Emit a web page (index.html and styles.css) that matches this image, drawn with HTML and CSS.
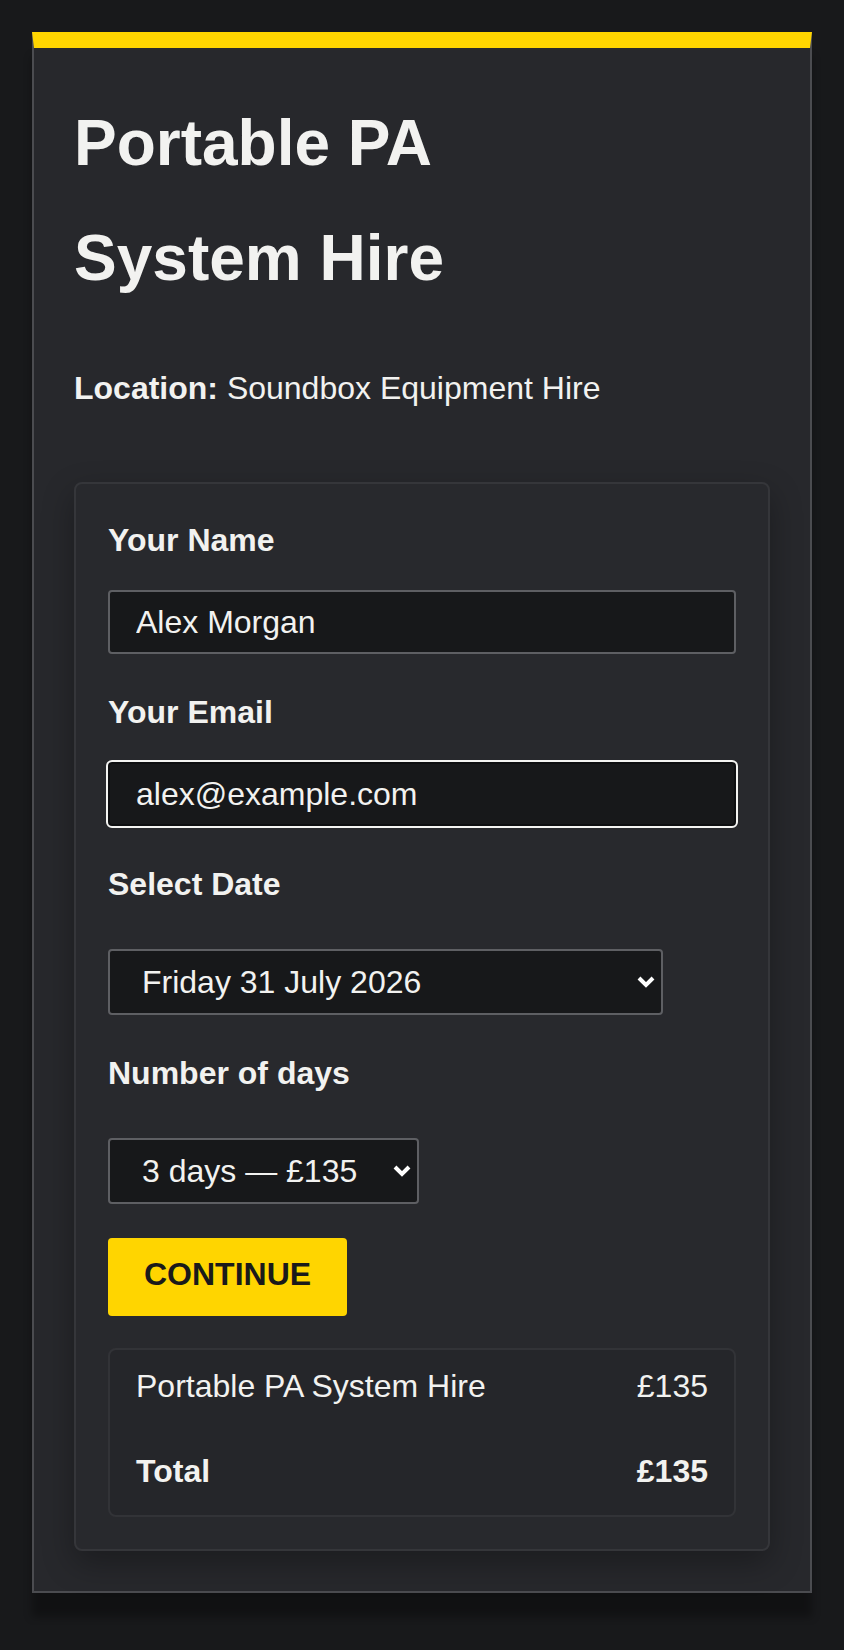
FILE: index.html
```html
<!DOCTYPE html>
<html lang="en">
  <head>
    <meta charset="UTF-8" />
    <meta name="viewport" content="width=device-width, initial-scale=1.0" />
    <title>Portable PA System Hire</title>
    <link rel="stylesheet" href="styles.css">
  </head>

  <body>
    <main class="booking">
      <h1 class="booking-title">Portable PA System Hire</h1>
      <p class="booking-location"><strong>Location:</strong> Soundbox Equipment Hire</p>

      <form class="booking-form">
        <div class="field">
          <label for="name">Your Name</label>
          <input id="name" type="text" value="Alex Morgan" />
        </div>

        <div class="field">
          <label for="email">Your Email</label>
          <input id="email" class="is-focused" type="email" value="alex@example.com" />
        </div>

        <div class="field field-select">
          <label for="date">Select Date</label>
          <div class="select-wrap select-date">
            <select id="date">
              <option>Friday 31 July 2026</option>
              <option>Saturday 1 August 2026</option>
              <option>Sunday 2 August 2026</option>
            </select>
            <svg class="select-arrow" viewBox="0 0 18 12" width="18" height="12">
              <path d="M2 2 L9 9 L16 2" fill="none" stroke="#fff" stroke-width="4" />
            </svg>
          </div>
        </div>

        <div class="field field-select">
          <label for="days">Number of days</label>
          <div class="select-wrap select-days">
            <select id="days">
              <option>1 day — £60</option>
              <option>2 days — £100</option>
              <option selected>3 days — £135</option>
            </select>
            <svg class="select-arrow" viewBox="0 0 18 12" width="18" height="12">
              <path d="M2 2 L9 9 L16 2" fill="none" stroke="#fff" stroke-width="4" />
            </svg>
          </div>
        </div>

        <button type="button" class="continue">CONTINUE</button>

        <div class="summary">
          <div class="summary-row">
            <span>Portable PA System Hire</span>
            <span>£135</span>
          </div>
          <div class="summary-row summary-total">
            <span>Total</span>
            <span>£135</span>
          </div>
        </div>
      </form>
    </main>
  </body>
</html>
```

FILE: styles.css
```css
* {
  box-sizing: border-box;
}

body {
  margin: 0;
  padding: 32px;
  background: #18191b;
  color: #f2f2f0;
  font-family: "Liberation Sans", Arial, sans-serif;
  font-size: 32px;
  line-height: 48px;
}

.booking {
  background: #27282c;
  border: 2px solid #4b4c50;
  border-top: 16px solid #ffd500;
  padding: 38px 40px 40px;
  box-shadow: 0 24px 8px rgba(0, 0, 0, 0.3);
}

.booking-title {
  max-width: 560px;
  margin: 0 0 48px;
  font-size: 64px;
  font-weight: 700;
  line-height: 1.8;
}

.booking-location {
  margin: 0 0 70px;
}

.booking-form {
  background: #28292d;
  border: 2px solid #35363a;
  border-radius: 8px;
  padding: 32px;
  box-shadow: 0 12px 32px rgba(0, 0, 0, 0.3);
}

.field {
  margin-bottom: 34px;
}

.field label {
  display: block;
  font-weight: 700;
  margin-bottom: 26px;
}

.field-select label {
  margin-bottom: 41px;
}

.field input {
  display: block;
  width: 100%;
  height: 64px;
  padding: 0 26px;
  background: #17181a;
  border: 2px solid #5e5f63;
  border-radius: 4px;
  color: #f2f2f0;
  font-family: inherit;
  font-size: 32px;
  outline: none;
}

.field input.is-focused {
  border-color: #0e0f11;
  outline: 2px solid #f4f4f2;
  outline-offset: 0;
}

.select-wrap {
  position: relative;
}

.select-date {
  width: 555px;
}

.select-days {
  width: 311px;
}

.select-wrap select {
  display: block;
  width: 100%;
  height: 66px;
  padding: 0 56px 0 32px;
  appearance: none;
  -webkit-appearance: none;
  background: #17181a;
  border: 2px solid #5e5f63;
  border-radius: 4px;
  color: #f2f2f0;
  font-family: inherit;
  font-size: 32px;
  outline: none;
}

.select-arrow {
  position: absolute;
  right: 8px;
  top: 27px;
  pointer-events: none;
}

.continue {
  display: block;
  margin: 0 0 32px;
  padding: 12px 36px 18px;
  background: #ffd500;
  border: none;
  border-radius: 4px;
  color: #1a1a1a;
  font-family: inherit;
  font-size: 32px;
  font-weight: 700;
  line-height: 48px;
  cursor: pointer;
}

.summary {
  background: #25262a;
  border: 2px solid #323337;
  border-radius: 8px;
  padding: 12px 26px 20px;
}

.summary-row {
  display: flex;
  justify-content: space-between;
}

.summary-total {
  margin-top: 37px;
  font-weight: 700;
}
```
